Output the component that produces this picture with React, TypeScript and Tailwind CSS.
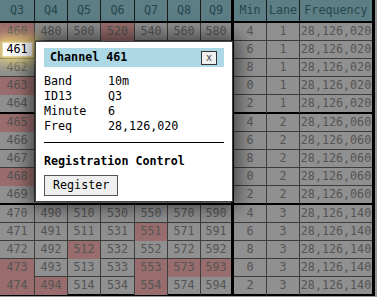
import React from "react";

const GRID =
  "grid w-[375px] grid-cols-[35px_33px_33px_34px_33px_33px_30px_36px_33px_75px]";

const PINK: Record<number, number[]> = {
  460: [0, 3],
  463: [0],
  465: [0],
  468: [0],
  471: [4],
  472: [2],
  473: [0, 4, 5, 6],
  474: [0, 1, 4],
};

const ROWS = Array.from({ length: 15 }, (_, i) => {
  const id = 460 + i;
  const group = Math.floor(i / 5);
  return {
    id,
    q: Array.from({ length: 7 }, (_, k) => id + 20 * k),
    min: [4, 6, 8, 0, 2][i % 5],
    lane: group + 1,
    freq: ["28,126,020", "28,126,060", "28,126,140"][group],
    last: i % 5 === 4,
  };
});

const HEAD = ["Q3", "Q4", "Q5", "Q6", "Q7", "Q8", "Q9", "Min", "Lane", "Frequency"];

function cellEdge(k: number, dark: boolean) {
  const thin = dark ? "border-r border-r-[#2a2a2a]" : "border-r border-r-[#666]";
  if (k === 6) return "";
  if (k === 7) return `border-l-[3px] border-l-black ${thin}`;
  if (k === 9) return "border-r-[3px] border-r-black";
  return thin;
}

function Table() {
  return (
    <div className="w-[375px]">
      <div className={`${GRID} h-[23px] border-b-2 border-black bg-[#9bd2de] text-[#3f7580]`}>
        {HEAD.map((h, k) => (
          <div key={h} className={`flex items-center justify-center ${cellEdge(k, true)}`}>
            {h}
          </div>
        ))}
      </div>
      {ROWS.map((r) => {
        const vals: (string | number)[] = [...r.q, r.min, r.lane, r.freq];
        return (
          <div
            key={r.id}
            className={`${GRID} ${
              r.last ? "h-[19px] border-b-2 border-black" : "h-[18px] border-b border-[#666]"
            } bg-[#f0f0f0] text-[#8e8e8e]`}
          >
            {vals.map((v, k) => {
              const pink = k < 7 && PINK[r.id]?.includes(k);
              return (
                <div
                  key={k}
                  className={`flex items-center justify-center ${cellEdge(k, false)} ${
                    pink ? "bg-[#ffb6b6]" : ""
                  }`}
                >
                  {r.id === 461 && k === 0 ? (
                    <span className="relative z-20 flex h-[13px] w-[29px] items-center justify-center bg-white text-black outline outline-1 outline-[#eadca0] shadow-[0_0_12px_7px_rgba(255,228,120,0.75)]">
                      {v}
                    </span>
                  ) : (
                    v
                  )}
                </div>
              );
            })}
          </div>
        );
      })}
    </div>
  );
}

function ChannelPopup() {
  const info = [
    ["Band", "10m"],
    ["ID13", "Q3"],
    ["Minute", "6"],
    ["Freq", "28,126,020"],
  ];
  return (
    <div className="absolute left-[35px] top-[41px] z-30 w-[198px] border border-[#444] bg-white px-[8px] pb-[5px] pt-[6px] text-black shadow-[0_0_18px_5px_rgba(0,0,0,0.55)]">
      <div className="flex h-[19px] items-center justify-between bg-[#add8e6] pl-[6px] pr-[7px]">
        <span className="font-bold">Channel 461</span>
        <button className="flex h-[14px] w-[16px] items-center justify-center border border-[#333] bg-[#f0f0f0] text-[10px] leading-none text-[#444]">
          x
        </button>
      </div>
      <div className="mt-[7px] grid grid-cols-[64px_1fr] leading-[15px]">
        {info.map(([k, v]) => (
          <React.Fragment key={k}>
            <span>{k}</span>
            <span>{v}</span>
          </React.Fragment>
        ))}
      </div>
      <div className="mt-[8px] h-px bg-black" />
      <div className="mt-[11px] font-bold leading-[15px]">Registration Control</div>
      <button className="mt-[6px] h-[21px] border border-[#555] bg-[#efefef] px-[8px] leading-[19px]">
        Register
      </button>
    </div>
  );
}

export default function App() {
  return (
    <div className="relative h-[297px] w-[377px] overflow-hidden bg-white font-['DejaVu_Sans_Mono',monospace] text-[11.7px]">
      <Table />
      <div className="absolute inset-0 z-10 bg-black/40" />
      <ChannelPopup />
    </div>
  );
}
